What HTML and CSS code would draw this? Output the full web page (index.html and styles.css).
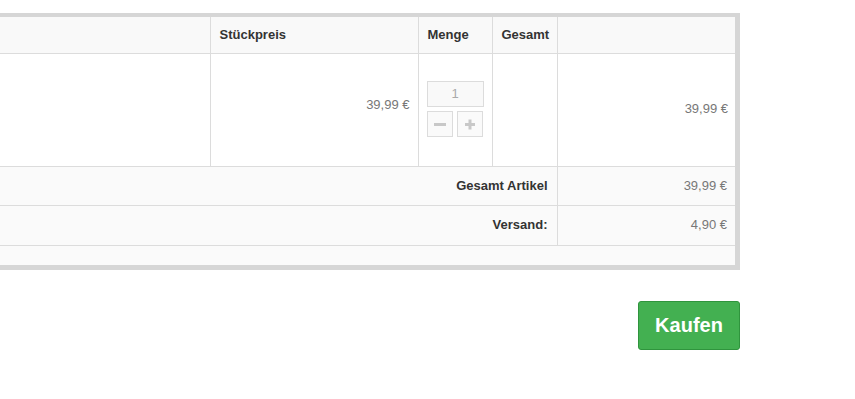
FILE: index.html
```html
<!DOCTYPE html>
<html lang="de">

<head>
    <meta charset="UTF-8">
    <meta name="viewport" content="width=device-width, initial-scale=1">
    <title>Warenkorb</title>
    <link rel="stylesheet" href="styles.css">
</head>

<body>
    <div class="cart">
        <div class="cart-frame">
            <table class="cart-table">
                <colgroup>
                    <col class="col-item">
                    <col class="col-price">
                    <col class="col-qty">
                    <col class="col-total">
                    <col class="col-sum">
                </colgroup>
                <thead>
                    <tr>
                        <th class="first"></th>
                        <th>Stückpreis</th>
                        <th>Menge</th>
                        <th>Gesamt</th>
                        <th></th>
                    </tr>
                </thead>
                <tbody>
                    <tr class="item">
                        <td class="first"></td>
                        <td class="price">39,99 €</td>
                        <td class="qty">
                            <div class="qty-box">
                                <input type="text" value="1" readonly>
                                <div class="qty-buttons">
                                    <button type="button" aria-label="weniger">
                                        <svg width="12" height="12" viewBox="0 0 12 12">
                                            <rect x="0" y="5" width="12" height="3" />
                                        </svg>
                                    </button>
                                    <button type="button" aria-label="mehr">
                                        <svg width="12" height="12" viewBox="0 0 12 12">
                                            <rect x="1" y="5" width="10" height="3" />
                                            <rect x="4.5" y="1.5" width="3" height="10" />
                                        </svg>
                                    </button>
                                </div>
                            </div>
                        </td>
                        <td></td>
                        <td class="value">39,99 €</td>
                    </tr>
                    <tr class="summary">
                        <td colspan="4" class="label first">Gesamt Artikel</td>
                        <td class="value">39,99 €</td>
                    </tr>
                    <tr class="summary shipping">
                        <td colspan="4" class="label first">Versand:</td>
                        <td class="value">4,90 €</td>
                    </tr>
                    <tr class="spacer">
                        <td colspan="5" class="first"></td>
                    </tr>
                </tbody>
            </table>
        </div>

        <div class="actions">
            <button type="button" class="buy">Kaufen</button>
        </div>
    </div>
</body>

</html>
```

FILE: styles.css
```css
body {
    margin: 0;
    background: #fff;
    font-family: 'Liberation Sans', Arial, sans-serif;
    font-size: 13px;
    color: #333;
}

.cart {
    width: 740px;
    padding-top: 13px;
}

.cart-frame {
    border: 4px solid #d6d6d6;
    border-left: none;
    border-right-width: 5px;
    border-bottom-width: 5px;
    background: #fafafa;
}

.cart-table {
    width: 100%;
    border-collapse: collapse;
    table-layout: fixed;
}

.col-item {
    width: 210px;
}

.col-price {
    width: 208px;
}

.col-qty {
    width: 74px;
}

.col-total {
    width: 65px;
}

th,
td {
    border: 1px solid #dcdcdc;
    padding: 0 9px;
}

th.first,
td.first {
    border-left: none;
}

tr > :last-child {
    border-right: none;
}

thead th {
    height: 35px;
    padding-bottom: 1px;
    text-align: left;
    font-weight: bold;
    color: #333;
    background: #f9f9f9;
    border-top: none;
}

.item td {
    height: 101px;
    background: #fff;
    vertical-align: middle;
}

.item .price {
    text-align: right;
    color: #777;
    padding-right: 8px;
    padding-bottom: 11px;
}

.item .value {
    height: 98px;
    padding-bottom: 3px;
}

.value {
    text-align: right;
    color: #777;
    padding-right: 7px;
}

.summary td {
    height: 36px;
    padding-bottom: 2px;
    background: #fafafa;
}

.shipping td {
    height: 37px;
}

.summary .label {
    text-align: right;
    font-weight: bold;
    color: #333;
}

.summary .value {
    padding-right: 8px;
}

.spacer td {
    height: 19px;
    border-right: none;
    border-bottom: none;
    background: #fafafa;
}

.qty {
    padding: 0 8px;
}

.qty-box {
    width: 57px;
    display: flex;
    flex-direction: column;
    gap: 4px;
    margin-bottom: 3px;
}

.qty-box input {
    box-sizing: border-box;
    width: 57px;
    height: 26px;
    margin: 0;
    padding: 0;
    border: 1px solid #dcdcdc;
    background: #f9f9f9;
    color: #aaa;
    text-align: center;
    font-family: 'Liberation Sans', Arial, sans-serif;
    font-size: 13px;
}

.qty-buttons {
    display: flex;
    gap: 4px;
}

.qty-buttons button {
    box-sizing: border-box;
    width: 26px;
    height: 26px;
    padding: 0;
    border: 1px solid #dcdcdc;
    background: #fafafa;
    display: flex;
    justify-content: center;
    align-items: center;
}

.qty-buttons svg {
    fill: #c8c8c8;
}

.actions {
    display: flex;
    justify-content: flex-end;
    margin-top: 31px;
}

.buy {
    width: 102px;
    height: 49px;
    background: #43b051;
    border: 1px solid #2f943d;
    border-radius: 3px;
    color: #fff;
    font-family: 'Liberation Sans', Arial, sans-serif;
    font-size: 20px;
    font-weight: bold;
    cursor: pointer;
}
```
